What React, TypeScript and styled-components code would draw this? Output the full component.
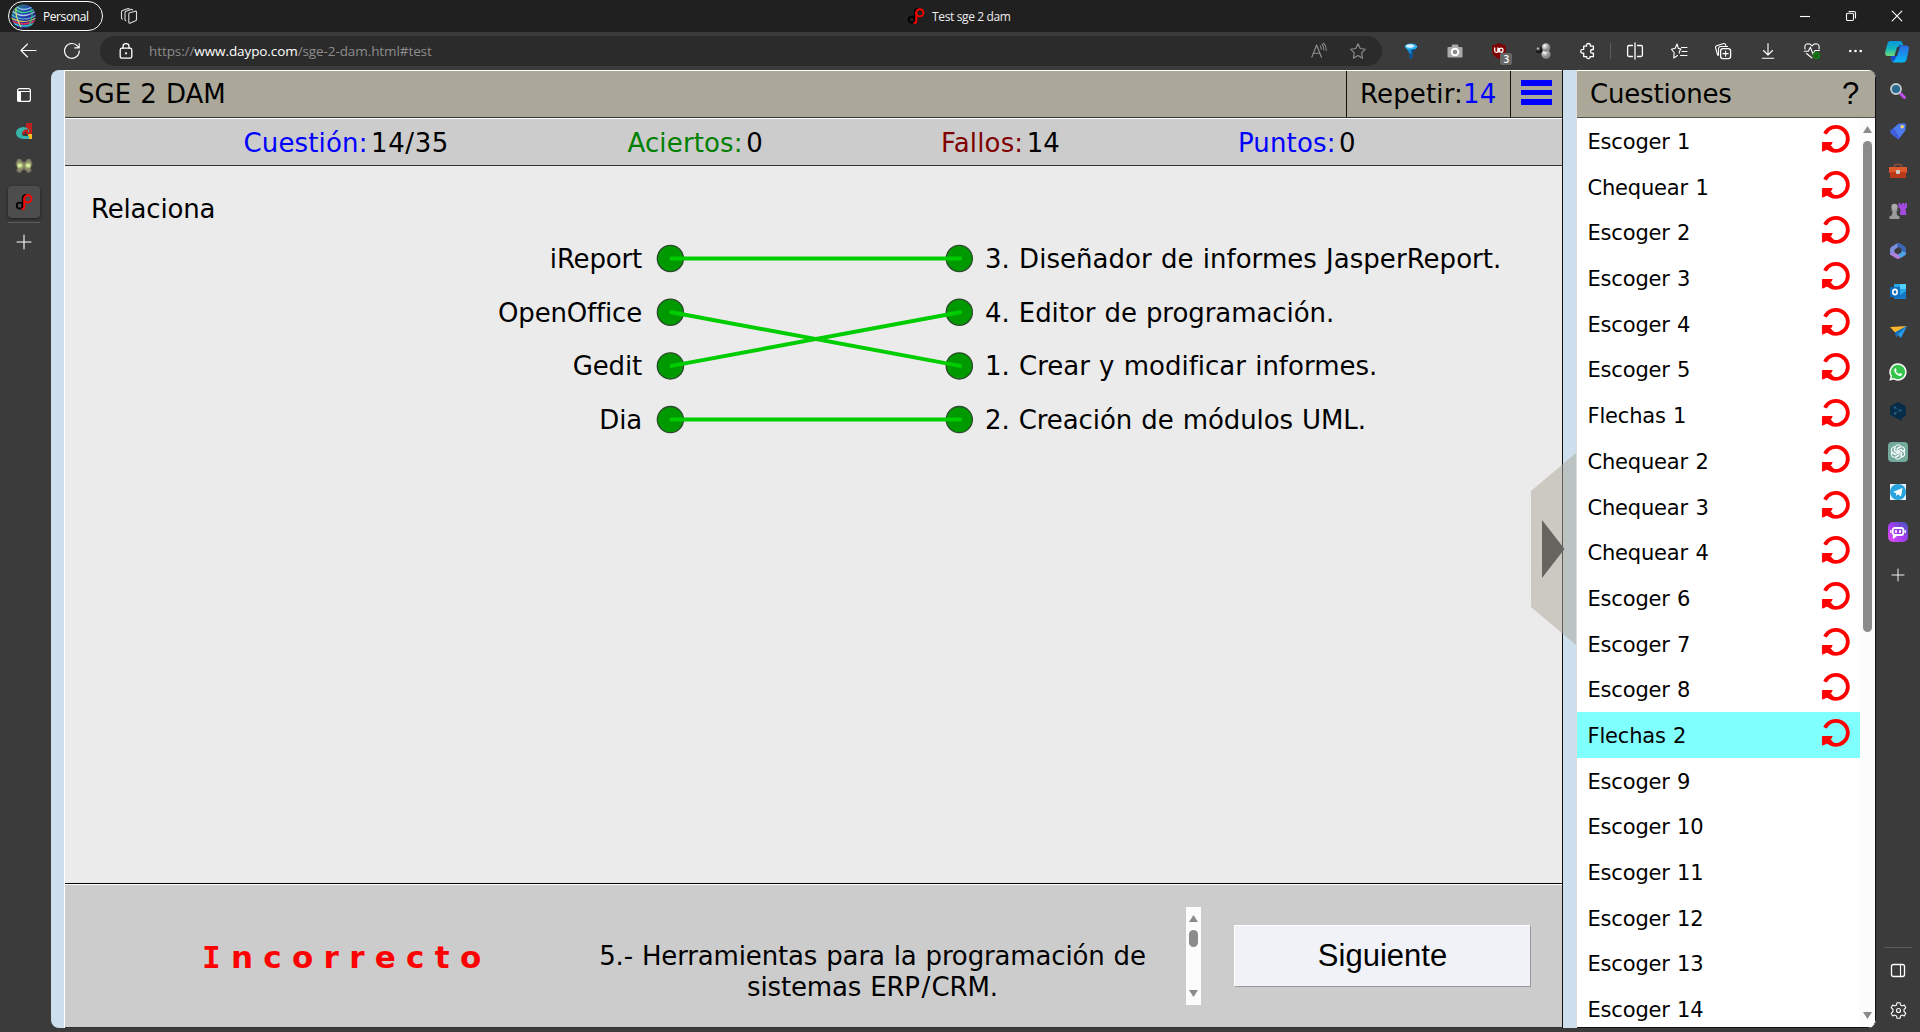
import React from "react";
import styled, { createGlobalStyle, css } from "styled-components";

const Global = createGlobalStyle`
  * { box-sizing: border-box; }
  html, body { margin: 0; padding: 0; background: #3b3b3b; overflow: hidden; }
`;

const quizFont = css`
  font-family: Verdana, "DejaVu Sans", sans-serif;
  word-spacing: 0.034em;
  letter-spacing: -0.007em;
`;

const Browser = styled.div`
  width: 1920px;
  height: 1032px;
  display: flex;
  flex-direction: column;
  background: #3b3b3b;
  font-family: "Segoe UI", "Open Sans", "Noto Sans", sans-serif;
  color: #fff;
  overflow: hidden;
`;

const Icon = styled.svg<{ $w?: number; $h?: number; $color?: string }>`
  display: block;
  flex: none;
  width: ${(p) => p.$w ?? 16}px;
  height: ${(p) => p.$h ?? p.$w ?? 16}px;
  fill: none;
  stroke: ${(p) => p.$color ?? "#fff"};
  stroke-width: 1.1;
  stroke-linecap: round;
  stroke-linejoin: round;
  overflow: visible;
`;

/* ---------- Title bar ---------- */
const TitleBar = styled.header`
  height: 32px;
  flex: none;
  display: grid;
  grid-template-columns: 908px 1fr auto;
  align-items: center;
  background: #202020;
`;
const TitleLeft = styled.div`
  display: flex;
  align-items: center;
  gap: 18px;
  padding-left: 8px;
`;
const Profile = styled.div`
  width: 95px;
  height: 30px;
  display: flex;
  align-items: center;
  gap: 7px;
  padding-left: 2px;
  border: 1px solid #fff;
  border-radius: 15px;
  font-size: 12px;
  letter-spacing: -0.42px;
`;
const TabTitle = styled.div`
  display: flex;
  align-items: center;
  gap: 8px;
  font-size: 12px;
  letter-spacing: -0.36px;
  color: #eee;
`;
const WindowButtons = styled.div`
  display: flex;
`;
const WindowButton = styled.div`
  width: 46px;
  display: flex;
  justify-content: center;
`;

/* ---------- Address bar ---------- */
const Toolbar = styled.div`
  height: 38px;
  flex: none;
  display: flex;
  align-items: center;
`;
const NavButtons = styled.div`
  width: 100px;
  display: flex;
  gap: 28.5px;
  padding-left: 19.5px;
`;
const Address = styled.div`
  width: 1282px;
  height: 30px;
  display: flex;
  align-items: center;
  padding: 0 16px 0 19px;
  border-radius: 15px;
  background: #2b2b2b;
`;
const Url = styled.div`
  flex: 1;
  padding-left: 16px;
  font-size: 13.5px;
  letter-spacing: -0.09px;
  color: #8d8d8d;
  white-space: nowrap;
  b { font-weight: 400; color: #fff; }
`;
const AddressTools = styled.div`
  display: flex;
  gap: 23px;
  align-items: center;
`;
const ToolGroup = styled.div<{ $start: number }>`
  display: flex;
  margin-left: ${(p) => p.$start}px;
`;
const Tool = styled.div<{ $w?: number }>`
  width: ${(p) => p.$w ?? 44.2}px;
  display: flex;
  justify-content: center;
  align-items: center;
  position: relative;
`;
const ToolDivider = styled.div`
  width: 1px;
  height: 16px;
  background: #5d5d5d;
`;
const CountBadge = styled.span`
  position: absolute;
  left: 23px;
  top: 10px;
  width: 12px;
  height: 12px;
  border-radius: 2px;
  background: #666;
  font-size: 10px;
  font-weight: 600;
  line-height: 12px;
  text-align: center;
`;

/* ---------- Side rails ---------- */
const Body = styled.div`
  flex: 1;
  display: flex;
  min-height: 0;
`;
const LeftRail = styled.aside`
  width: 51px;
  flex: none;
  display: flex;
  flex-direction: column;
  align-items: center;
  padding: 9px 4px 0 0;
`;
const RailTab = styled.div<{ $active?: boolean }>`
  width: 32px;
  height: 32px;
  margin-bottom: 3.7px;
  display: flex;
  align-items: center;
  justify-content: center;
  border-radius: 4px;
  background: ${(p) => (p.$active ? "#4d4d4d" : "transparent")};
  box-shadow: ${(p) => (p.$active ? "0 1px 3px #1d1d1d" : "none")};
`;
const RailLine = styled.div<{ $w?: number }>`
  width: ${(p) => p.$w ?? 32}px;
  height: 1px;
  flex: none;
  background: #5c5c5c;
`;
const RightRail = styled.aside`
  width: 44px;
  flex: none;
  display: flex;
  flex-direction: column;
  align-items: center;
  padding: 1px 0 3px;
`;
const RailItem = styled.div<{ $h?: number }>`
  height: ${(p) => p.$h ?? 40.1}px;
  flex: none;
  display: flex;
  align-items: center;
  justify-content: center;
`;
const RailSpace = styled.div`
  flex: 1;
`;

/* ---------- Page ---------- */
const Page = styled.main`
  position: relative;
  width: 1825px;
  height: 958px;
  display: flex;
  gap: 13px;
  padding-left: 13px;
  border-radius: 8px;
  background: #cddeed;
  color: #000;
  overflow: hidden;
  ${quizFont}
  font-size: 26px;
`;
const Quiz = styled.section`
  width: 1499px;
  display: flex;
  flex-direction: column;
  border-left: 1px solid #fff;
  border-right: 1px solid #111;
`;
const QuizHeader = styled.div`
  height: 48px;
  display: flex;
  background: #aba899;
  border-top: 1px solid #fff;
  border-bottom: 1px solid #333;
  line-height: 46px;
`;
const QuizTitle = styled.div`
  flex: 1;
  padding-left: 13px;
  letter-spacing: 0;
`;
const Repeat = styled.div`
  width: 164px;
  padding-left: 13px;
  border-left: 1px solid #111;
  letter-spacing: 0.15px;
  white-space: nowrap;
  span { color: #00f; }
`;
const MenuButton = styled.div`
  width: 52px;
  display: flex;
  flex-direction: column;
  gap: 4px;
  padding: 9px 0 0 10px;
  border-left: 1px solid #111;
`;
const MenuBar = styled.i`
  width: 31px;
  height: 5.6px;
  background: #00f;
`;
const Stats = styled.div`
  height: 48px;
  display: flex;
  justify-content: space-evenly;
  padding: 0 28px 0 0;
  background: #ccc;
  border-top: 1px solid #fff;
  border-bottom: 1px solid #333;
  line-height: 48px;
`;
const Stat = styled.div<{ $color: string }>`
  display: flex;
  gap: 3.5px;
  label { color: ${(p) => p.$color}; letter-spacing: 0.15px; }
`;
const StatValue = styled.span<{ $spacing?: number }>`
  letter-spacing: ${(p) => p.$spacing ?? -0.18}px;
`;
const Question = styled.div`
  height: 717px;
  background: #ebebeb;
  padding-top: 26px;
`;
const Prompt = styled.div`
  height: 40px;
  padding-left: 26px;
  line-height: 34px;
`;
const Match = styled.div`
  display: grid;
  grid-template-columns: 577px 343px 1fr;
`;
const MatchColumn = styled.div<{ $align: string }>`
  padding-top: 1px;
  text-align: ${(p) => p.$align};
  white-space: nowrap;
`;
const MatchItem = styled.div<{ $spacing?: number }>`
  height: 53.7px;
  line-height: 53.7px;
  letter-spacing: ${(p) => p.$spacing ?? -0.18}px;
`;
const Footer = styled.div`
  flex: 1;
  display: flex;
  align-items: flex-start;
  background: #ccc;
  border-top: 1px solid #fff;
  border-bottom: 1px solid #333;
  box-shadow: 0 -1px 0 #000;
  margin-top: 1px;
`;
const Verdict = styled.div`
  width: 520px;
  padding: 52px 0 0 137px;
  color: #f00;
  font-weight: 700;
  font-size: 31px;
  line-height: 40px;
  letter-spacing: 10.3px;
  white-space: nowrap;
`;
const SerifCap = styled.span`
  font-family: "DejaVu Sans Mono", monospace;
`;
const Explanation = styled.div`
  width: 575px;
  padding-top: 56px;
  line-height: 31px;
  letter-spacing: -0.15px;
  text-align: center;
`;
const Wide = styled.span`
  letter-spacing: 1.4px;
`;
const MiniScroll = styled.div`
  width: 15px;
  height: 98px;
  margin: 22px 33px 0 26px;
  display: flex;
  flex-direction: column;
  align-items: center;
  background: #fcfcfc;
  padding: 8px 0;
`;
const NextButton = styled.button`
  width: 297px;
  height: 62px;
  margin-top: 40px;
  padding: 0;
  border: 1px solid #999;
  border-top-color: #fff;
  border-left-color: #fff;
  background: #f0f2f7;
  font-family: Arial, "Liberation Sans", sans-serif;
  font-size: 31px;
  color: #000;
`;

/* ---------- Question list ---------- */
const Side = styled.section`
  width: 300px;
  display: flex;
  flex-direction: column;
  border-left: 1px solid #ddd;
  border-right: 1px solid #111;
  border-radius: 0 8px 8px 0;
  background: #fff;
  overflow: hidden;
`;
const SideHeader = styled.div`
  height: 48px;
  flex: none;
  display: flex;
  justify-content: space-between;
  padding: 0 16px 0 13px;
  background: #aba899;
  border-top: 1px solid #fff;
  border-bottom: 1px solid #55534c;
  line-height: 46px;
`;
const Help = styled.span`
  font-family: Arial, "Liberation Sans", sans-serif;
  font-size: 31px;
`;
const SideBody = styled.div`
  flex: 1;
  min-height: 0;
  display: flex;
  border-bottom: 1px solid #111;
`;
const List = styled.div`
  width: 283px;
  overflow: hidden;
`;
const ListRow = styled.div<{ $selected?: boolean }>`
  height: 45.7px;
  display: flex;
  justify-content: space-between;
  padding: 0 10px 0 10.5px;
  font-size: 21px;
  line-height: 48px;
  background: ${(p) => (p.$selected ? "#80ffff" : "#fff")};
`;
const RetrySlot = styled.div`
  padding-top: 7px;
`;
const Scrollbar = styled.div`
  flex: 1;
  display: flex;
  flex-direction: column;
  align-items: center;
  background: #fcfcfc;
  padding: 8px 0;
`;
const Thumb = styled.div<{ $h: number }>`
  width: 9px;
  height: ${(p) => p.$h}px;
  border-radius: 4.5px;
  background: #8b8b8b;
  margin: 8px 0 auto;
`;
const Handle = styled.div`
  position: absolute;
  left: 1480px;
  top: 383px;
`;

const Arrow = ({ down }: { down?: boolean }) => (
  <Icon $w={9} $h={7} viewBox="0 0 9 7">
    <path d={down ? "M0 0h9L4.5 7z" : "M0 7h9L4.5 0z"} fill="#8b8b8b" stroke="none" />
  </Icon>
);

const Retry = () => (
  <Icon $w={28} $h={28} viewBox="0 0 28 28">
    <path d="M3 8.8A12 12 0 1 1 8.5 24.6" stroke="#f00" strokeWidth="3.7" strokeLinecap="butt" />
    <path d="M.8 17.5h9.4l-1.8 3 3 3.6-3.3 1.6-3.300-1.500L.8 26z" fill="#f00" stroke="#f00" strokeWidth="1" />
  </Icon>
);

const DaypoLogo = () => (
  <Icon viewBox="0 0 16 16">
    <circle cx="3.7" cy="11.7" r="3" stroke="#000" strokeWidth="1.8" />
    <path d="M6.700 13V4.200C6.700 2 8 1 9.700 1" stroke="#000" strokeWidth="1.8" />
    <circle cx="11.8" cy="4.8" r="3.6" stroke="#f00" strokeWidth="1.9" />
    <path d="M8.300 4.500v7.800c0 1.600-.6 2.600-1.800 2.900" stroke="#f00" strokeWidth="2" />
  </Icon>
);

const Plus = ({ size = 14 }: { size?: number }) => (
  <Icon $w={size} viewBox="0 0 14 14">
    <path d="M7 0v14M0 7h14" />
  </Icon>
);

const stats = [
  { label: "Cuestión:", value: "14/35", color: "#00f", spacing: 0.6 },
  { label: "Aciertos:", value: "0", color: "#008000" },
  { label: "Fallos:", value: "14", color: "#800000" },
  { label: "Puntos:", value: "0", color: "#00f" },
];
const terms = ["iReport", "OpenOffice", "Gedit", "Dia"];
const meanings = [
  { text: "3. Diseñador de informes JasperReport.", spacing: 0.04 },
  { text: "4. Editor de programación.", spacing: -0.06 },
  { text: "1. Crear y modificar informes.", spacing: 0.01 },
  { text: "2. Creación de módulos UML.", spacing: -0.08 },
];
const links = [[0, 0], [1, 2], [2, 1], [3, 3]];
const questions = [
  "Escoger 1", "Chequear 1", "Escoger 2", "Escoger 3", "Escoger 4", "Escoger 5", "Flechas 1",
  "Chequear 2", "Chequear 3", "Chequear 4", "Escoger 6", "Escoger 7", "Escoger 8", "Flechas 2",
  "Escoger 9", "Escoger 10", "Escoger 11", "Escoger 12", "Escoger 13", "Escoger 14",
];
const current = 13;
const dotY = (i: number) => 26.5 + i * 53.7;

function MatchDiagram() {
  return (
    <Icon $w={343} $h={215} viewBox="0 0 343 215">
      {terms.map((t, i) => (
        <g key={t} fill="#090" stroke="#2c4a2c" strokeWidth="1.3">
          <circle cx="28.4" cy={dotY(i)} r="13.1" />
          <circle cx="317.3" cy={dotY(i)} r="13.1" />
        </g>
      ))}
      {links.map(([a, b]) => (
        <path key={a} d={`M29.5 ${dotY(a)}L318 ${dotY(b)}`} stroke="#00cd00" strokeWidth="4" />
      ))}
    </Icon>
  );
}

function TopBar() {
  return (
    <TitleBar>
      <TitleLeft>
        <Profile>
          <Icon $w={25} viewBox="0 0 25 25">
            <defs>
              <clipPath id="avatar"><circle cx="12.5" cy="12.5" r="12" /></clipPath>
              <linearGradient id="avatarBg" x1="0" y1="0" x2="1" y2="1">
                <stop offset="0" stopColor="#289a55" /><stop offset=".45" stopColor="#2744b5" />
                <stop offset=".7" stopColor="#2d1f86" /><stop offset="1" stopColor="#1d8e74" />
              </linearGradient>
            </defs>
            <g clipPath="url(#avatar)">
              <path d="M0 0h25v25H0z" fill="url(#avatarBg)" stroke="none" />
              <path d="M6 3q6 5 15 0" stroke="#8fc0ea" strokeWidth="1.3" />
              <path d="M4 5q8 7 20 0" stroke="#3be08a" strokeWidth="1.1" />
              <path d="M2 7.500q10 8 22 0" stroke="#a7cbe9" strokeWidth="1.5" />
              <path d="M1 11q12 8 24 0" stroke="#58b8e0" strokeWidth="1.2" />
              <path d="M0 14q14 7 25 0" stroke="#d5c957" strokeWidth="1.2" />
              <path d="M1 17q12 6 23 0" stroke="#e0305c" strokeWidth="1.5" />
              <path d="M3 20q10 4 19 0" stroke="#35c3d0" strokeWidth="1.5" />
              <path d="M5 4q-1 9 5 19" stroke="#cfe16b" strokeWidth="1.1" />
              <path d="M20 5q3 7-2 17" stroke="#2fb96a" strokeWidth="1.1" />
            </g>
          </Icon>
          Personal
        </Profile>
        <Icon viewBox="0 0 16 16" $color="#ddd">
          <path d="M8.6 4.800l5.500-1.600q1.400-.3 1.400 1v7.200q0 1-1 1.300l-5 2.200q-1.700.7-1.700-1V6q0-1 .8-1.200z" />
          <path d="M5 12.800q-1 0-1-1.200V4.600q0-1 1-1.400L10 1.400q1-.3 1.600.4M1.500 11Q.5 11 .5 9.700V4q0-1 1-1.400L7 .5q.8-.2 1.200.4" />
        </Icon>
      </TitleLeft>
      <TabTitle><DaypoLogo />Test sge 2 dam</TabTitle>
      <WindowButtons>
        <WindowButton><Icon $w={10} viewBox="0 0 10 10"><path d="M0 5.500h10" strokeLinecap="butt" /></Icon></WindowButton>
        <WindowButton>
          <Icon $w={10} viewBox="0 0 10 10"><rect x=".5" y="2.3" width="7" height="7.2" rx="1.2" /><path d="M3 .5h5q1.500 0 1.500 1.500v5" /></Icon>
        </WindowButton>
        <WindowButton><Icon $w={10} viewBox="0 0 10 10"><path d="M.2.2l9.600 9.600M9.800.2L.2 9.800" /></Icon></WindowButton>
      </WindowButtons>
    </TitleBar>
  );
}

function AddressBar() {
  return (
    <Toolbar>
      <NavButtons>
        <Icon viewBox="0 0 16 16"><path d="M16 7.500H1M7.500 1L1 7.500 7.500 14" /></Icon>
        <Icon viewBox="0 0 16 16"><path d="M15.300 7.800A7.400 7.400 0 1 1 13.600 3.200L15 4.800M15.200.5v4.400h-4.500" /></Icon>
      </NavButtons>
      <Address>
        <Icon $w={14} $h={16} viewBox="0 0 14 16">
          <rect x="1.2" y="5.2" width="11.6" height="10" rx="1.8" strokeWidth="1.3" />
          <path d="M4 5V3.300Q4 .6 7 .6t3 2.700V5" strokeWidth="1.3" />
          <circle cx="7" cy="10.3" r="1.1" fill="#fff" stroke="none" />
        </Icon>
        <Url>https://<b>www.daypo.com</b>/sge-2-dam.html#test</Url>
        <AddressTools>
          <Icon viewBox="0 0 16 16" $color="#8f8f8f">
            <path d="M.8 14.300L5.600 2l4.800 12.300M2.400 10.200h6.400M9.300 3q1 1.200.9 3M11 1.200q2 2.200 1.800 5.500M12.600.2q2.800 3 2.600 7" />
          </Icon>
          <Icon viewBox="0 0 16 16" $color="#8f8f8f">
            <path d="M8 .7l2.200 4.800 5.200.7-3.800 3.700.9 5.300L8 12.600l-4.600 2.600.9-5.300L.6 6.200l5.200-.7z" />
          </Icon>
        </AddressTools>
      </Address>
      <ToolGroup $start={7}>
        <Tool>
          <Icon viewBox="0 0 16 16">
            <path d="M2.500 4L13.500 4 9.500 10.500v4q-1.500 2-3 0v-4z" fill="#1686d0" stroke="none" />
            <path d="M8.500 5.500l3.500.5-3 5z" fill="#063a6c" stroke="none" />
            <path d="M6.500 10.500h3v4q-1.500 2-3 0z" fill="#0d4f88" stroke="none" />
            <ellipse cx="8" cy="3.600" rx="6.200" ry="3" fill="#32b3f4" stroke="none" />
            <ellipse cx="7" cy="3" rx="4" ry="1.800" fill="#d8f3ff" stroke="none" />
          </Icon>
        </Tool>
        <Tool>
          <Icon viewBox="0 0 16 16">
            <path d="M1.500 4h2.800l1-2.500h5.400l1 2.500h2.800q1 0 1 1v8.500q0 1-1 1h-13q-1 0-1-1V5q0-1 1-1z" fill="#aaa" stroke="none" />
            <circle cx="8" cy="9" r="3.300" strokeWidth="2" fill="#888" />
          </Icon>
        </Tool>
        <Tool>
          <Icon viewBox="0 0 16 16">
            <path d="M8 0q3 2 6.800 2.200V8q0 4.700-6.800 8Q1.200 12.700 1.200 8V2.200Q5 2 8 0z" fill="#800000" stroke="none" />
            <path d="M3.700 5v2.800q0 1.500 1.600 1.500T6.900 7.800V5M8.200 9.200V5.500M12 7.200a1.700 2 0 1 1-3.500 0 1.700 2 0 1 1 3.500 0" strokeWidth="1.300" />
          </Icon>
          <CountBadge>3</CountBadge>
        </Tool>
        <Tool>
          <Icon viewBox="0 0 16 16">
            <defs>
              <radialGradient id="ball" cx=".35" cy=".3"><stop offset="0" stopColor="#fff" /><stop offset="1" stopColor="#8a8a8a" /></radialGradient>
              <radialGradient id="darkBall" cx=".35" cy=".3"><stop offset="0" stopColor="#ddd" /><stop offset=".6" stopColor="#333" /><stop offset="1" stopColor="#151515" /></radialGradient>
            </defs>
            <circle cx="10" cy="11.200" r="4.600" fill="url(#ball)" stroke="none" />
            <circle cx="10" cy="4.500" r="4.300" fill="url(#ball)" stroke="none" />
            <circle cx="3" cy="6.900" r="3.300" fill="url(#darkBall)" stroke="none" />
          </Icon>
        </Tool>
        <Tool>
          <Icon viewBox="0 0 16 16">
            <path d="M3.700 3.200h2.800q-.4-2.600 2-2.700 2.200.1 1.900 2.700h3v3.300h-1.200q-1.700.3-1.700 1.900t1.700 1.800h1.200v3.500H10q.2 2-1.600 2t-1.700-2H3.700v-3.500Q.7 10.500.7 8.300t3-2z" strokeWidth="1.300" />
          </Icon>
        </Tool>
      </ToolGroup>
      <ToolDivider />
      <ToolGroup $start={2}>
        <Tool>
          <Icon viewBox="0 0 16 16"><path d="M8 0v16M5.500 2.500H2q-1.400 0-1.400 1.400v8.200q0 1.400 1.400 1.400h3.500M10.500 2.500H14q1.400 0 1.400 1.400v8.200q0 1.400-1.400 1.400h-3.500" strokeWidth="1.300" /></Icon>
        </Tool>
        <Tool>
          <Icon viewBox="0 0 16 16"><path d="M8.300 10.300V8.500L10 6l-2.600-.6L6 1 4.200 5.200.4 6.200l2.700 3.300L2.800 15 6.500 12.500M10.500 4.500H16M11 8.500h5M9.500 12.500H16" /></Icon>
        </Tool>
        <Tool>
          <Icon viewBox="0 0 16 16">
            <rect x="5.600" y="5.600" width="10" height="10" rx="2.300" strokeWidth="1.300" />
            <path d="M10.600 8v5.200M8 10.600h5.200M3.500 12.300L2.600 12Q1.500 8 .5 4.500q-.1-1.300 1-1.800L8.700.5q1.500-.2 2 1.500l.3 1.300M3.500 11.500v-6q.3-2 2-2h7" />
          </Icon>
        </Tool>
        <Tool>
          <Icon viewBox="0 0 16 16"><path d="M8 .5v11.200M3.500 7.500L8 12l4.500-4.500M2.300 15.300h11.400" /></Icon>
        </Tool>
        <Tool>
          <Icon viewBox="0 0 16 16">
            <path d="M1 6Q0 1 4 .8 6.500.8 8 3q1.500-2.200 4-2.200Q16 1 15 6M.3 8.200h4l2-4L9 11l2-3.500h4.500M2.500 10.500L8 15" />
            <circle cx="12.400" cy="12.600" r="3.800" fill="#137a13" stroke="none" />
            <path d="M10.800 12.800l1.200 1 2-2.300" stroke="#2e442e" />
          </Icon>
        </Tool>
        <Tool>
          <Icon viewBox="0 0 16 16"><g fill="#fff" stroke="none"><circle cx="2.300" cy="8" r="1.300" /><circle cx="7.500" cy="8" r="1.300" /><circle cx="12.700" cy="8" r="1.300" /></g></Icon>
        </Tool>
        <Tool $w={38}>
          <Icon $w={24} $h={23} viewBox="0 0 24 23">
            <defs>
              <linearGradient id="copA" x1="0" y1="0" x2="0" y2="1"><stop offset="0" stopColor="#0796df" /><stop offset=".5" stopColor="#12b4bd" /><stop offset="1" stopColor="#72dd77" /></linearGradient>
              <linearGradient id="copB" x1="0" y1="0" x2="0" y2="1"><stop offset="0" stopColor="#2b6ce0" /><stop offset="1" stopColor="#08b7f4" /></linearGradient>
            </defs>
            <g stroke="none">
              <path d="M5 1h10q2 0 2.500 2l.7 2.500h-4L10 16H3q-3.500 0-2.800-4L2.500 3.500Q3 1 5 1z" fill="url(#copA)" />
              <path d="M10.500 16l2-7.500q1-3 3.500-3h5q3.500 0 2.800 4l-2 9q-.6 4-4 4H9q-2 0-2.500-3L6 16z" fill="url(#copB)" />
              <path d="M14 5.500h3.500Q14.500 6 13.700 9l-2 7-2.700 5q-1.800 1-2.600-2L6 16h3.500q1.500 0 2-2.500z" fill="#1547cf" />
              <path d="M12 7h3l-3 9H9.500z" fill="#303a45" />
            </g>
          </Icon>
        </Tool>
      </ToolGroup>
    </Toolbar>
  );
}

function RightApps() {
  return (
    <RightRail>
      <RailItem>
        <Icon viewBox="0 0 16 16"><path d="M10.500 10.500l4 4" stroke="#c44df0" strokeWidth="3" /><circle cx="6" cy="6" r="5" fill="#2a6b91" stroke="#c3cbd0" strokeWidth="1.800" /></Icon>
      </RailItem>
      <RailItem>
        <Icon viewBox="0 0 16 16">
          <path d="M8.500.8L14 .2q1.800 0 1.900 1.800l-.6 5.500-5.500 7.300q-1.300 1.600-3 .3L1 10.500Q-.3 9 .8 7.500z" fill="#4e7cf0" stroke="none" />
          <path d="M.8 7.500l3-2.500L10 15q-1.400 1.600-3.200.3L1 10.500Q-.3 9 .8 7.500z" fill="#405edb" stroke="none" />
          <circle cx="12.200" cy="3.800" r="1.700" fill="#ffd36b" stroke="none" />
        </Icon>
      </RailItem>
      <RailItem>
        <Icon $w={18} $h={14} viewBox="0 0 18 14">
          <path d="M5.500 4V1.500q0-1 1-1h5q1 0 1 1V4" stroke="#8f4c3c" strokeWidth="1.500" />
          <path d="M0 3h18v6H0z" fill="#e0592d" stroke="none" /><path d="M1 8h16v6H1z" fill="#b93a19" stroke="none" />
          <rect x="7" y="6" width="4" height="4" rx="1" fill="#ccc" stroke="none" />
        </Icon>
      </RailItem>
      <RailItem>
        <Icon $w={18} $h={16} viewBox="0 0 18 16">
          <path d="M9.500 0h2v1.500h1.700V0h2v1.500h1V0H18v4.500L16.500 6l1 6H11l.5-6L9.500 4.500z" fill="#a34be0" stroke="none" />
          <circle cx="5.500" cy="4" r="3.200" fill="#aaa" stroke="none" /><path d="M2.500 6.500h6v1.500H7.500l.5 4 2.500 1.500V16H.5v-2.500L3 12l.5-4h-1z" fill="#9b9b9b" stroke="none" />
        </Icon>
      </RailItem>
      <RailItem>
        <Icon viewBox="0 0 16 16">
          <g stroke="none">
            <path d="M7.500 0L1.500 3.700Q0 4.700 0 6.500v5.700l4.500-2.400V6.500L9 3.500V1z" fill="#7c8fdc" />
            <path d="M7.500 0q1.500-.2 3 .8l4 2.500Q16 4.300 16 6v4l-4.500-2.500V6L7 3z" fill="#3e66b8" />
            <path d="M16 9.500q0 2-1.500 3l-5 3q-1.500.9-3 0l-5-3L0 10.500l4.500-1 3.500 2 4-2.300z" fill="#b07fdc" />
            <path d="M11.500 7.500L16 10q0 1.700-1.500 2.600L11 14.700 8 11.500l3.500-2z" fill="#4aa2e8" />
          </g>
        </Icon>
      </RailItem>
      <RailItem>
        <Icon viewBox="0 0 16 16">
          <g stroke="none"><path d="M4 0h12v15H4z" fill="#28a8ea" /><path d="M10 0h6v5h-6z" fill="#50d0ff" /><path d="M4 7l6 4 6-4v8H4z" fill="#1479c9" /><path d="M0 3h10v10H0z" fill="#0f6cbd" /></g>
          <ellipse cx="5" cy="8" rx="2.200" ry="2.600" strokeWidth="1.600" />
        </Icon>
      </RailItem>
      <RailItem>
        <Icon $w={17} $h={14} viewBox="0 0 17 14"><g stroke="none"><path d="M0 2L17 1 5 7.500z" fill="#f9b52b" /><path d="M17 1L11 13 5 7.500z" fill="#259be8" /><path d="M5 7.500L17 1 8 9.500 6 13z" fill="#1570bb" /></g></Icon>
      </RailItem>
      <RailItem>
        <Icon $w={18} viewBox="0 0 18 18">
          <path d="M9 .3A8.700 8.700 0 1 1 4.700 16.600L.3 17.700l1.200-4.300A8.700 8.700 0 0 1 9 .3z" fill="#fff" stroke="none" />
          <path d="M9 1.800A7.200 7.200 0 1 1 5 15l-2.600.6.700-2.500A7.200 7.200 0 0 1 9 1.800z" fill="#35c44c" stroke="none" />
          <path d="M6.500 5l1.200 2.300-.8 1q1.300 2 3.300 2.800l1-1.200 2 1q-.3 2-2.200 2-3.800-.7-5.800-4.700Q5 6 6.500 5z" fill="#fff" stroke="none" />
        </Icon>
      </RailItem>
      <RailItem>
        <Icon $w={16} $h={19} viewBox="0 0 16 19"><path d="M8 0l8 4.500v9L12 16v3l-5-2.500-7-4v-8z" fill="#072c47" stroke="none" /><path d="M5 5.500l5 3-5 3" stroke="#1d4f73" strokeWidth=".9" /><g fill="#245f86" stroke="none"><circle cx="5" cy="5.500" r="1.200" /><circle cx="10.500" cy="8.500" r="1.200" /><circle cx="5" cy="11.500" r="1.200" /></g></Icon>
      </RailItem>
      <RailItem>
        <Icon $w={20} viewBox="0 0 20 20">
          <rect width="20" height="20" rx="4" fill="#74aa9c" stroke="none" />
          {[0, 60, 120, 180, 240, 300].map((a) => (
            <path key={a} transform={`rotate(${a} 10 10)`} d="M7 9V5.500q.3-2.500 3-2.700 1.700 0 2.800 1.300L9 6.300v4.200" strokeWidth="1" />
          ))}
        </Icon>
      </RailItem>
      <RailItem>
        <Icon viewBox="0 0 16 16"><path d="M0 0h16v16H0z" fill="#e6f2f8" stroke="none" /><circle cx="8" cy="8" r="8" fill="#27a3dd" stroke="none" /><path d="M3 8l9.500-4-1.500 8.500-3-2.200L6.500 12 6 9z" fill="#fff" stroke="none" /></Icon>
      </RailItem>
      <RailItem>
        <Icon $w={20} viewBox="0 0 20 20">
          <defs><linearGradient id="poe" x1="0" y1="1" x2="1" y2="0"><stop offset="0" stopColor="#e44cf0" /><stop offset=".5" stopColor="#a33df0" /><stop offset="1" stopColor="#3f55b8" /></linearGradient></defs>
          <rect width="20" height="20" rx="5" fill="url(#poe)" stroke="none" />
          <rect x="4.700" y="6" width="10.600" height="7" rx="2" strokeWidth="1.800" /><path d="M5.500 13v3l3-2.500M2.800 8.500v2M17.200 8.500v2" strokeWidth="1.400" /><path d="M8 9v1M12 9v1" strokeWidth="2" />
        </Icon>
      </RailItem>
      <RailItem $h={46}><Plus size={12} /></RailItem>
      <RailSpace />
      <RailLine $w={28} />
      <RailItem $h={44}><Icon $w={14} $h={13} viewBox="0 0 14 13"><rect x=".5" y=".5" width="13" height="12" rx="2" strokeWidth="1.300" /><path d="M9.500 .5v12" /></Icon></RailItem>
      <RailItem $h={37}>
        <Icon $w={17} viewBox="0 0 17 17">
          <path d="M7 .7h3l.5 2.300 1.500.9 2.300-.8 1.500 2.600L14 7.500v2l1.800 1.800-1.500 2.600-2.300-.8-1.500.9-.5 2.300H7L6.500 14 5 13.100l-2.300.8-1.500-2.600L3 9.500v-2L1.200 5.700l1.500-2.600L5 3.900 6.500 3z" /><circle cx="8.500" cy="8.500" r="2" />
        </Icon>
      </RailItem>
    </RightRail>
  );
}

export default function App() {
  return (
    <Browser>
      <Global />
      <TopBar />
      <AddressBar />
      <Body>
        <LeftRail>
          <RailTab>
            <Icon $w={14} viewBox="0 0 14 14"><rect x=".6" y=".6" width="12.800" height="12.800" rx="2" strokeWidth="1.200" /><path d="M0 4h4v10H2q-2 0-2-2z" fill="#fff" stroke="none" /><path d="M1 3.500h12" /></Icon>
          </RailTab>
          <RailTab>
            <Icon viewBox="0 0 16 16"><g stroke="none"><path d="M10 0h6v11h-6z" fill="#c41f1f" /><path d="M12 11h4v5h-4z" fill="#f4bd25" /><path d="M7 4q4 0 6 3v2H9q-3 0-3 2t3 2h4v3H7q-7-1-7-6t7-6z" fill="#35b5ab" /><path d="M8 7l4-1v3H9l-1 3-2-2z" fill="#c41f1f" /></g></Icon>
          </RailTab>
          <RailTab>
            <Icon viewBox="0 0 16 16">
              <path d="M2 1.500q3-.5 4 2l2 1.500 2-1.500q1-2.500 4-2l2 4-2 4 1 3-2.500 2L8 10.500 3.500 14.500 1 12.500l1-3-2-4z" fill="#8d8b6c" stroke="#77755f" />
              <circle cx="3.800" cy="7.500" r="2.500" fill="#dbe9a9" stroke="#9cb56a" /><circle cx="12.200" cy="7.500" r="2.500" fill="#dbe9a9" stroke="#9cb56a" />
            </Icon>
          </RailTab>
          <RailTab $active><DaypoLogo /></RailTab>
          <RailLine />
          <RailItem $h={39}><Plus /></RailItem>
        </LeftRail>
        <Page>
          <Quiz>
            <QuizHeader>
              <QuizTitle>SGE 2 DAM</QuizTitle>
              <Repeat>Repetir:<span>14</span></Repeat>
              <MenuButton><MenuBar /><MenuBar /><MenuBar /></MenuButton>
            </QuizHeader>
            <Stats>
              {stats.map((s) => (
                <Stat key={s.label} $color={s.color}>
                  <label>{s.label}</label>
                  <StatValue $spacing={s.spacing}>{s.value}</StatValue>
                </Stat>
              ))}
            </Stats>
            <Question>
              <Prompt>Relaciona</Prompt>
              <Match>
                <MatchColumn $align="right">{terms.map((t) => <MatchItem key={t}>{t}</MatchItem>)}</MatchColumn>
                <MatchDiagram />
                <MatchColumn $align="left">
                  {meanings.map((m) => <MatchItem key={m.text} $spacing={m.spacing}>{m.text}</MatchItem>)}
                </MatchColumn>
              </Match>
            </Question>
            <Footer>
              <Verdict><SerifCap>I</SerifCap>ncorrecto</Verdict>
              <Explanation>5.- Herramientas para la programación de<br />sistemas ER<Wide>P/</Wide>CRM.</Explanation>
              <MiniScroll><Arrow /><Thumb $h={17} /><Arrow down /></MiniScroll>
              <NextButton>Siguiente</NextButton>
            </Footer>
          </Quiz>
          <Side>
            <SideHeader>Cuestiones<Help>?</Help></SideHeader>
            <SideBody>
              <List>
                {questions.map((q, i) => (
                  <ListRow key={q} $selected={i === current}>
                    {q}
                    {i <= current && <RetrySlot><Retry /></RetrySlot>}
                  </ListRow>
                ))}
              </List>
              <Scrollbar><Arrow /><Thumb $h={491} /><Arrow down /></Scrollbar>
            </SideBody>
          </Side>
          <Handle>
            <Icon $w={45} $h={192} viewBox="0 0 45 192">
              <path d="M0 38L45 0v192L0 154z" fill="#aba899" fillOpacity=".5" stroke="none" />
              <path d="M11 67l22.500 29L11 125z" fill="#66645f" stroke="none" />
            </Icon>
          </Handle>
        </Page>
        <RightApps />
      </Body>
    </Browser>
  );
}
